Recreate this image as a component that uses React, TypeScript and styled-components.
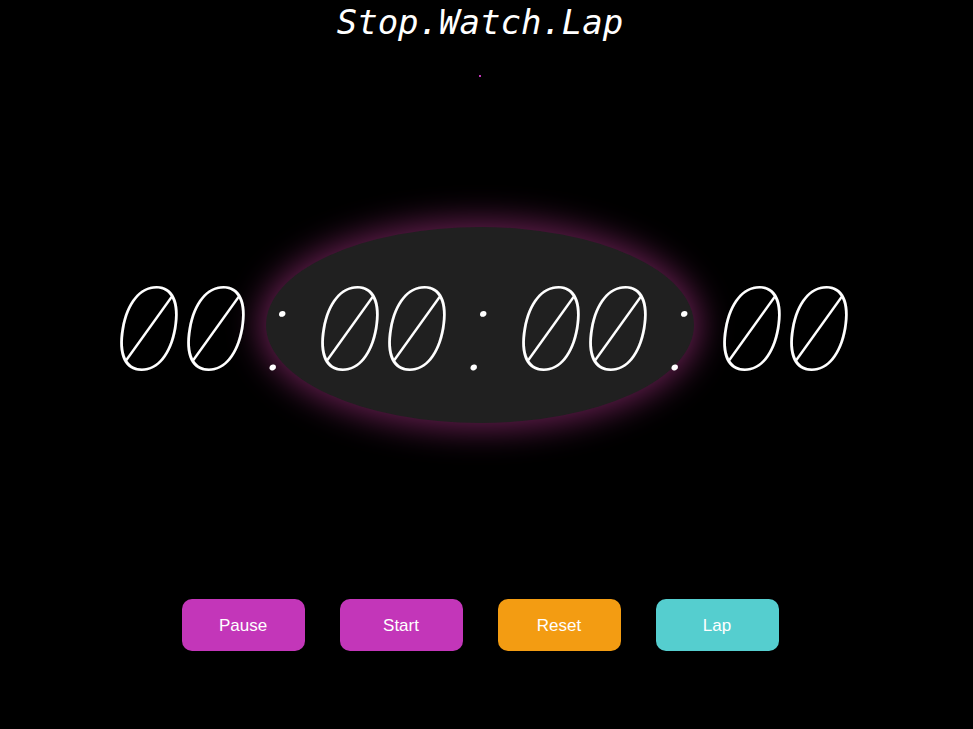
import React, { useState } from "react";
import styled, { createGlobalStyle } from "styled-components";

const GlobalStyle = createGlobalStyle`
  html, body {
    margin: 0;
    padding: 0;
    background: #000;
  }
`;

const formatTime = (ms: number) => {
  const hours = Math.floor(ms / 3600000);
  const minutes = Math.floor((ms % 3600000) / 60000);
  const seconds = Math.floor((ms % 60000) / 1000);
  const centis = Math.floor((ms % 1000) / 10);
  return [hours, minutes, seconds, centis]
    .map((n) => String(n).padStart(2, "0"))
    .join(":");
};

export default function App() {
  const [elapsed] = useState<number>(0);
  const [laps] = useState<number[]>([]);

  const buttons = [
    { label: "Pause", color: "#c336b9" },
    { label: "Start", color: "#c336b9" },
    { label: "Reset", color: "#f39c12" },
    { label: "Lap", color: "#55cecf" },
  ];

  return (
    <>
      <GlobalStyle />
      <Page>
        <Title>Stop.Watch.Lap</Title>
        <LapList>
          {laps.map((lap, i) => (
            <li key={i}>{formatTime(lap)}</li>
          ))}
        </LapList>
        <Display>
          <Halo />
          <Digits>
            {formatTime(elapsed)
              .split("")
              .map((ch, i) => (
                <Cell key={i}>{ch}</Cell>
              ))}
          </Digits>
        </Display>
        <ButtonRow>
          {buttons.map((b) => (
            <ActionButton key={b.label} $color={b.color}>
              {b.label}
            </ActionButton>
          ))}
        </ButtonRow>
      </Page>
    </>
  );
}

const Page = styled.div`
  min-height: 729px;
  padding-right: 13px;
  display: flex;
  flex-direction: column;
  align-items: center;
  color: #fff;
`;

const Title = styled.h1`
  margin: 0;
  font-family: "DejaVu Sans Mono", "Liberation Mono", monospace;
  font-style: italic;
  font-weight: 300;
  font-size: 34px;
  line-height: 44px;
  color: #fff;
`;

const LapList = styled.ul`
  margin: 31px 0 0;
  padding: 0;
  list-style: none;
  width: 2px;
  min-height: 2px;
  background: #c336b9;
`;

const Display = styled.div`
  margin-top: 150px;
  display: grid;
  place-items: center;
`;

const Halo = styled.div`
  grid-area: 1 / 1;
  width: 428px;
  height: 196px;
  border-radius: 50%;
  background: #202020;
  box-shadow: 0 0 32px 7px rgba(165, 50, 130, 0.6);
`;

const Digits = styled.div`
  grid-area: 1 / 1;
  display: flex;
  padding-top: 8px;
  font-family: Inter, "Noto Sans", sans-serif;
  font-weight: 100;
  font-size: 114px;
  line-height: 1;
  font-feature-settings: "zero" 1, "tnum" 1;
  color: #fff;
`;

const Cell = styled.span`
  width: 67px;
  text-align: center;
  transform: skewX(-10deg) scaleX(1.08);
`;

const ButtonRow = styled.div`
  margin-top: 176px;
  display: flex;
  gap: 35px;
`;

const ActionButton = styled.button<{ $color: string }>`
  width: 123px;
  height: 52px;
  border: none;
  border-radius: 10px;
  background: ${({ $color }) => $color};
  color: #fff;
  font-family: "Liberation Sans", Arial, sans-serif;
  font-size: 17px;
  line-height: 20px;
  padding: 2px 0 0;
  cursor: pointer;
`;
